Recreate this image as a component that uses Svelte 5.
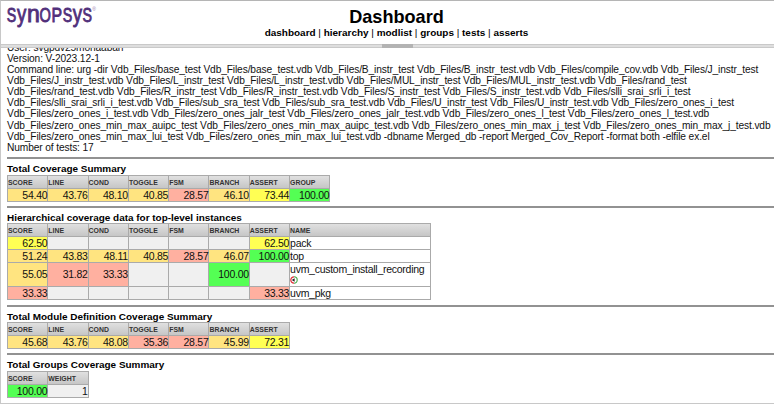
<script>
  const y = 'yellow', g = 'green', a = 'amber', r = 'red', n = 'none';
  const base = ['SCORE', 'LINE', 'COND', 'TOGGLE', 'FSM', 'BRANCH', 'ASSERT'];
  const lines = [
    'User: svgpdv25mohaaban',
    'Version: V-2023.12-1',
    'Command line: urg -dir Vdb_Files/base_test Vdb_Files/base_test.vdb Vdb_Files/B_instr_test Vdb_Files/B_instr_test.vdb Vdb_Files/compile_cov.vdb Vdb_Files/J_instr_test',
    'Vdb_Files/J_instr_test.vdb Vdb_Files/L_instr_test Vdb_Files/L_instr_test.vdb Vdb_Files/MUL_instr_test Vdb_Files/MUL_instr_test.vdb Vdb_Files/rand_test',
    'Vdb_Files/rand_test.vdb Vdb_Files/R_instr_test Vdb_Files/R_instr_test.vdb Vdb_Files/S_instr_test Vdb_Files/S_instr_test.vdb Vdb_Files/slli_srai_srli_i_test',
    'Vdb_Files/slli_srai_srli_i_test.vdb Vdb_Files/sub_sra_test Vdb_Files/sub_sra_test.vdb Vdb_Files/U_instr_test Vdb_Files/U_instr_test.vdb Vdb_Files/zero_ones_i_test',
    'Vdb_Files/zero_ones_i_test.vdb Vdb_Files/zero_ones_jalr_test Vdb_Files/zero_ones_jalr_test.vdb Vdb_Files/zero_ones_l_test Vdb_Files/zero_ones_l_test.vdb',
    'Vdb_Files/zero_ones_min_max_auipc_test Vdb_Files/zero_ones_min_max_auipc_test.vdb Vdb_Files/zero_ones_min_max_j_test Vdb_Files/zero_ones_min_max_j_test.vdb',
    'Vdb_Files/zero_ones_min_max_lui_test Vdb_Files/zero_ones_min_max_lui_test.vdb -dbname Merged_db -report Merged_Cov_Report -format both -elfile ex.el',
    'Number of tests: 17'
  ];
  const sections = [
    { title: 'Total Coverage Summary', height: 49, gap: 12, head: [...base, 'GROUP'], rows: [
      { h: 13, c: [['54.40', a], ['43.76', a], ['48.10', a], ['40.85', a], ['28.57', r], ['46.10', a], ['73.44', y], ['100.00', g]] }
    ] },
    { title: 'Hierarchical coverage data for top-level instances', height: 99, gap: 11, head: base, named: true, rows: [
      { h: 13, name: 'pack', c: [['62.50', y], ['', n], ['', n], ['', n], ['', n], ['', n], ['62.50', y]] },
      { h: 13, name: 'top', c: [['51.24', a], ['43.83', a], ['48.11', a], ['40.85', a], ['28.57', r], ['46.07', a], ['100.00', g]] },
      { h: 24, name: 'uvm_custom_install_recording', icon: true, c: [['55.05', a], ['31.82', r], ['33.33', r], ['', n], ['', n], ['100.00', g], ['', n]] },
      { h: 13, name: 'uvm_pkg', c: [['33.33', r], ['', n], ['', n], ['', n], ['', n], ['', n], ['33.33', r]] }
    ] },
    { title: 'Total Module Definition Coverage Summary', height: 48, gap: 11, head: base, rows: [
      { h: 13, c: [['45.68', a], ['43.76', a], ['48.08', a], ['35.36', r], ['28.57', r], ['45.99', a], ['72.31', y]] }
    ] },
    { title: 'Total Groups Coverage Summary', height: 50, gap: 12, head: ['SCORE', 'WEIGHT'], rows: [
      { h: 13, c: [['100.00', g], ['1', n]] }
    ] }
  ];
</script>

<div class="page">
  <header>
    <svg class="logo" width="94" height="36" viewBox="0 -6 94 36" role="img" aria-label="Synopsys">
      <g fill="#51307b" stroke="#51307b" stroke-width=".9">
        <text transform="translate(-.2 17) scale(.7 1)" font-size="20.3">S</text>
        <text transform="translate(10.1 17) scale(.78 1)" font-size="23.8">y</text>
        <text transform="translate(19.9 17) scale(.97 1)" font-size="23.8">n</text>
        <text transform="translate(32.4 17) scale(.72 1)" font-size="20.3">O</text>
        <text transform="translate(44.4 17) scale(.78 1)" font-size="20.3">P</text>
        <text transform="translate(55.8 17) scale(.7 1)" font-size="20.3">S</text>
        <text transform="translate(65.7 17) scale(.78 1)" font-size="23.8">y</text>
        <text transform="translate(75.4 17) scale(.7 1)" font-size="20.3">S</text>
      </g>
      <text x="85.3" y="6.3" font-size="5" fill="#9681ad">®</text>
    </svg>
    <div class="heading">
      <h1>Dashboard</h1>
      <nav>dashboard <i>|</i> hierarchy <i>|</i> modlist <i>|</i> groups <i>|</i> tests <i>|</i> asserts</nav>
    </div>
  </header>
  <div class="splitter"><span></span></div>
  <main>
    <div class="info">
      {#each lines as line}<div>{line}</div>{/each}
    </div>
    {#each sections as s}
      <section style="height: {s.height}px">
        <h2 style="height: {s.gap}px">{s.title}</h2>
        <div class="table">
          <div class="row head">
            {#each s.head as h}<span class="cell">{h}</span>{/each}
            {#if s.named}<span class="cell name">NAME</span>{/if}
          </div>
          {#each s.rows as row}
            <div class="row" style="height: {row.h}px">
              {#each row.c as [value, tone]}<span class="cell {tone}">{value}</span>{/each}
              {#if row.name}
                <span class="cell name" class:linked={row.icon}><b>{row.name}</b>
                  {#if row.icon}
                    <svg width="8" height="8" viewBox="0 0 8 8">
                      <path d="M4 .8A3.2 3.2 0 1 0 4 7.2" fill="none" stroke="#e02f3a" stroke-width="1.2" />
                      <path d="M4 .8A3.2 3.2 0 0 1 4 7.2" fill="none" stroke="#3faa45" stroke-width="1.1" />
                      <path d="M1.8 4L4.6 2.2V5.8Z" fill="#222" />
                    </svg>
                  {/if}
                </span>
              {/if}
            </div>
          {/each}
        </div>
      </section>
    {/each}
  </main>
</div>

<style>
  :global(body) { background: #fff; overflow: hidden; }
  .page {
    width: 774px; height: 404px; box-sizing: border-box; overflow: hidden;
    display: flex; flex-direction: column;
    font-family: "Liberation Sans", Arial, sans-serif; color: #111;
    border-top: 1px solid #b5b5b5; border-left: 1px solid #c8c8c8; border-bottom: 1px solid #c8c8c8;
  }
  header { height: 43px; flex: none; display: grid; grid-template-columns: 1fr; }
  .logo { grid-area: 1 / 1; margin: -2px 0 0 6px; overflow: visible; }
  .heading { grid-area: 1 / 1; padding: 6px 0 0 18px; text-align: center; color: #000; }
  h1 { margin: 0; font-size: 18.1px; line-height: 20px; }
  nav { font-size: 9.96px; line-height: 11px; font-weight: 700; white-space: nowrap; }
  nav i { font-style: normal; font-weight: 400; }
  .splitter {
    height: 4px; flex: none; display: flex; justify-content: center;
    background: linear-gradient(#c9c9c9 1px, #dedede 1px, #dedede 3px, #c9c9c9 3px);
  }
  .splitter span { width: 31px; background: #b3b3b3; margin-left: 20px; }
  main { flex: 1; min-height: 0; overflow: hidden; padding-left: 6px; }
  .info { height: 109px; display: flex; flex-direction: column; justify-content: flex-end; box-sizing: border-box; padding-bottom: 4px; }
  .info div { flex: none; height: 11.15px; line-height: 11.15px; font-size: 10.2px; letter-spacing: -.12px; white-space: nowrap; }
  section { box-sizing: border-box; border-top: 2px solid #929292; }
  h2 { margin: 0; padding-top: 4px; font-size: 9.95px; line-height: 12px; color: #000; white-space: nowrap; }
  .table { width: max-content; border-top: 1px solid #aaa; border-left: 1px solid #aaa; }
  .row { display: flex; }
  .cell {
    box-sizing: border-box; width: 40.3px; border-right: 1px solid #aaa; border-bottom: 1px solid #aaa;
    display: flex; align-items: center; justify-content: flex-end; font-size: 10.5px; letter-spacing: -.27px; line-height: 11px;
  }
  .head { height: 13px; }
  .head .cell {
    justify-content: flex-start; font-size: 6.9px; letter-spacing: 0; font-weight: 700; color: #333;
    background: linear-gradient(#e0e0e0, #c6c6c6);
  }
  .cell.name { width: 141px; justify-content: center; align-items: flex-start; flex-direction: column; }
  .cell.linked { padding-bottom: 2px; }
  .name b { font-weight: 400; letter-spacing: -.27px; }
  .name svg { display: block; margin-top: 1px; }
  .yellow { background: #ffff54; }
  .green { background: #54ff54; }
  .amber { background: #ffe480; }
  .red { background: #ffb0a0; }
  .none { background: #f0f0f0; }
</style>
